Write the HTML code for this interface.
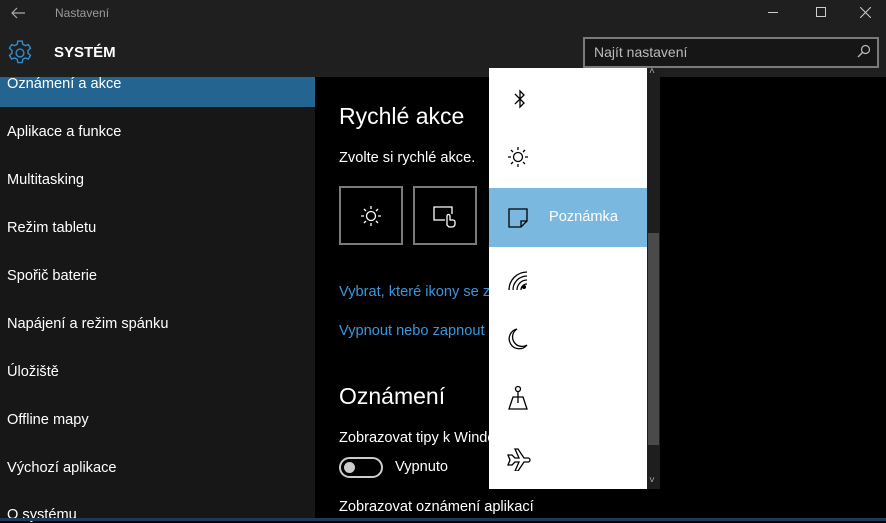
<!DOCTYPE html>
<html><head><meta charset="utf-8"><style>
*{margin:0;padding:0;box-sizing:border-box}
body{width:886px;height:521px;overflow:hidden;background:#000;font-family:"Liberation Sans",sans-serif;position:relative;color:#fff}
.abs{position:absolute}
.side{left:0;top:77px;width:315px;height:444px;background:#171717}
.item{position:absolute;left:7px;font-size:14.6px;color:#fff}
</style></head><body>
<div class="abs" style="left:0;top:0;width:886px;height:77px;background:#1f1f1f"></div>
<svg class="abs" style="left:10px;top:6px" width="16" height="14" viewBox="0 0 16 14"><path d="M15 7H2M7 2L2 7l5 5" stroke="#aaa" stroke-width="1.2" fill="none"/></svg>
<div class="abs" style="left:55px;top:6px;font-size:12px;color:#9a9a9a">Nastavení</div>
<div class="abs" style="left:768px;top:12px;width:10px;height:1px;background:#ccc"></div>
<div class="abs" style="left:816px;top:7px;width:10px;height:10px;border:1px solid #ccc"></div>
<svg class="abs" style="left:860px;top:7px" width="11" height="11"><path d="M0 0L11 11M11 0L0 11" stroke="#ccc" stroke-width="1"/></svg>
<svg class="abs" style="left:7px;top:40px" width="26" height="26" viewBox="0 0 24 24"><path d="M10 1h4l.6 3 2.2 1.2 2.9-1 2 3.4-2.3 2 0 2.6 2.3 2-2 3.4-2.9-1-2.2 1.2-.6 3h-4l-.6-3-2.2-1.2-2.9 1-2-3.4 2.3-2v-2.6l-2.3-2 2-3.4 2.9 1L9.4 4z" fill="none" stroke="#2f8fd0" stroke-width="1.3"/><circle cx="12" cy="12" r="3.6" fill="none" stroke="#2f8fd0" stroke-width="1.3"/></svg>
<div class="abs" style="left:54px;top:44px;font-size:15px;font-weight:bold">SYSTÉM</div>
<div class="abs" style="left:583px;top:37px;width:296px;height:31px;border:2px solid #7a7a7a;background:#161616"></div>
<div class="abs" style="left:594px;top:44px;font-size:14px;color:#bbb">Najít nastavení</div>
<svg class="abs" style="left:857px;top:44px" width="14" height="14"><circle cx="8.5" cy="5.5" r="4" fill="none" stroke="#bbb" stroke-width="1.2"/><path d="M5.5 8.5L1 13" stroke="#bbb" stroke-width="1.3"/></svg>
<div class="abs side"></div>
<div class="abs" style="left:0;top:77px;width:315px;height:30px;background:#236590"></div>
<div class="item" style="top:76px">Oznámení a akce</div>
<div class="item" style="top:124px">Aplikace a funkce</div>
<div class="item" style="top:172px">Multitasking</div>
<div class="item" style="top:220px">Režim tabletu</div>
<div class="item" style="top:268px">Spořič baterie</div>
<div class="item" style="top:316px">Napájení a režim spánku</div>
<div class="item" style="top:364px">Úložiště</div>
<div class="item" style="top:412px">Offline mapy</div>
<div class="item" style="top:460px">Výchozí aplikace</div>
<div class="item" style="top:507px">O systému</div>
<div class="abs" style="left:339px;top:103px;font-size:23px">Rychlé akce</div>
<div class="abs" style="left:339px;top:150px;font-size:14.6px">Zvolte si rychlé akce.</div>
<div class="abs" style="left:339px;top:186px;width:64px;height:59px;border:2px solid #7a7a7a"></div>
<svg class="abs" style="left:360px;top:205px" width="22" height="22" viewBox="0 0 22 22"><circle cx="11" cy="11" r="4.5" fill="none" stroke="#fff" stroke-width="1.3"/><path d="M11 1v3M11 18v3M1 11h3M18 11h3M4 4l2 2M16 16l2 2M4 18l2-2M16 6l2-2" stroke="#fff" stroke-width="1.3"/></svg>
<div class="abs" style="left:413px;top:186px;width:64px;height:59px;border:2px solid #7a7a7a"></div>
<svg class="abs" style="left:432px;top:204px" width="26" height="24" viewBox="0 0 26 24"><path d="M13 16H2V3h18v7" fill="none" stroke="#fff" stroke-width="1.3"/><path d="M15 21v-9a1.5 1.5 0 013 0v4h3a2 2 0 012 2v2a3 3 0 01-3 3h-3z" fill="#000" stroke="#fff" stroke-width="1.3"/></svg>
<div class="abs" style="left:339px;top:284px;font-size:14.6px;color:#3a96dd">Vybrat, které ikony se zobrazí</div>
<div class="abs" style="left:339px;top:323px;font-size:14.6px;color:#3a96dd">Vypnout nebo zapnout</div>
<div class="abs" style="left:339px;top:383px;font-size:23px">Oznámení</div>
<div class="abs" style="left:339px;top:430px;font-size:14.6px">Zobrazovat tipy k Windows</div>
<div class="abs" style="left:339px;top:457px;width:44px;height:21px;border:2px solid #ccc;border-radius:11px"></div>
<div class="abs" style="left:344px;top:462px;width:11px;height:11px;border-radius:50%;background:#ccc"></div>
<div class="abs" style="left:395px;top:459px;font-size:14.6px">Vypnuto</div>
<div class="abs" style="left:339px;top:499px;font-size:14.6px">Zobrazovat oznámení aplikací</div>
<div class="abs" style="left:0;top:518px;width:886px;height:3px;background:#1b3a55"></div>
<div class="abs" style="left:489px;top:68px;width:158px;height:421px;background:#fff"></div>
<div class="abs" style="left:647px;top:68px;width:13px;height:421px;background:#1e1e1e"></div>
<div class="abs" style="left:648px;top:233px;width:11px;height:212px;background:#4a4a4a"></div>
<div class="abs" style="left:649px;top:66px;font-size:10px;color:#aaa">˄</div>
<div class="abs" style="left:649px;top:475px;font-size:10px;color:#aaa">˅</div>
<div class="abs" style="left:489px;top:188px;width:158px;height:59px;background:#7ab8e0"></div>
<div class="abs" style="left:549px;top:209px;font-size:14.6px;color:#fff">Poznámka</div>
<svg class="abs" style="left:510px;top:88px" width="20" height="22" viewBox="0 0 20 22"><path d="M5 6l9 9-4 4V3l4 4-9 9" fill="none" stroke="#000" stroke-width="1.3"/></svg>
<svg class="abs" style="left:507px;top:146px" width="22" height="22" viewBox="0 0 22 22"><circle cx="11" cy="11" r="4.5" fill="none" stroke="#000" stroke-width="1.3"/><path d="M11 1v3M11 18v3M1 11h3M18 11h3M4 4l2 2M16 16l2 2M4 18l2-2M16 6l2-2" stroke="#000" stroke-width="1.3"/></svg>
<svg class="abs" style="left:507px;top:207px" width="22" height="22" viewBox="0 0 22 22"><path d="M2 2h18v12l-6 6H2z M14 20v-6h6" fill="none" stroke="#000" stroke-width="1.3"/></svg>
<svg class="abs" style="left:507px;top:270px" width="22" height="22" viewBox="0 0 22 22"><path d="M2 20A18 18 0 0120 2M6 20A14 14 0 0120 6M10 20a10 10 0 0110-10M14 20a6 6 0 016-6" fill="none" stroke="#000" stroke-width="1.3"/><circle cx="17" cy="17" r="2" fill="#000"/></svg>
<svg class="abs" style="left:507px;top:327px" width="22" height="24" viewBox="0 0 22 24"><path d="M10 2A10 10 0 1020 18 9 9 0 0110 2z" fill="none" stroke="#000" stroke-width="1.3"/></svg>
<svg class="abs" style="left:506px;top:385px" width="24" height="26" viewBox="0 0 24 26"><circle cx="12" cy="4" r="2.5" fill="none" stroke="#000" stroke-width="1.3"/><path d="M12 6.5V18M7 12h10l4 12H3z" fill="none" stroke="#000" stroke-width="1.3"/></svg>
<svg class="abs" style="left:506px;top:447px" width="26" height="24" viewBox="0 0 26 24"><path d="M2 8h4l3 3h4L9 2h3l6 9h4a2 2 0 010 4h-4l-6 9H9l4-9H9l-3 3H2l2-5z" fill="none" stroke="#000" stroke-width="1.3"/></svg>
</body></html>
